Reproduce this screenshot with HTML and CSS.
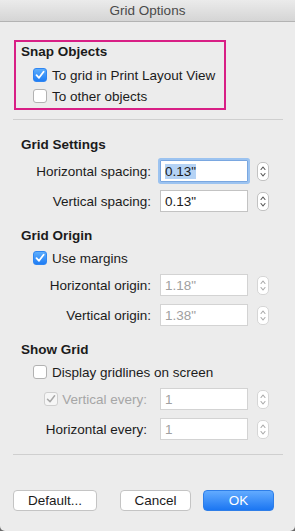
FILE: index.html
```html
<!DOCTYPE html>
<html lang="en">
<head>
    <meta charset="UTF-8">
    <meta name="viewport" content="width=device-width, initial-scale=1.0">
    <title>Grid Options</title>
    <link rel="stylesheet" href="styles.css">
</head>
<body>
    <div class="window">
        <div class="titlebar">Grid Options</div>

        <div class="snap-box">
            <div class="heading">Snap Objects</div>
            <label class="check-row">
                <span class="checkbox checked">
                    <svg viewBox="0 0 14 14"><path d="M3.5 7.2 L6 9.8 L10.6 3.8" fill="none" stroke="#fff" stroke-width="1.8" stroke-linecap="round" stroke-linejoin="round"/></svg>
                </span>
                To grid in Print Layout View
            </label>
            <label class="check-row">
                <span class="checkbox"></span>
                To other objects
            </label>
        </div>

        <div class="separator"></div>

        <div class="section">
            <div class="heading">Grid Settings</div>
            <div class="field-row first">
                <span class="field-label">Horizontal spacing:</span>
                <div class="input focused"><span class="selected">0.13"</span></div>
                <span class="stepper">
                    <svg viewBox="0 0 12 19"><path d="M4 7.5 L6 5 L8 7.5 M4 11.5 L6 14 L8 11.5" fill="none" stroke="#555" stroke-width="1.1" stroke-linecap="round" stroke-linejoin="round"/></svg>
                </span>
            </div>
            <div class="field-row">
                <span class="field-label">Vertical spacing:</span>
                <div class="input">0.13"</div>
                <span class="stepper">
                    <svg viewBox="0 0 12 19"><path d="M4 7.5 L6 5 L8 7.5 M4 11.5 L6 14 L8 11.5" fill="none" stroke="#555" stroke-width="1.1" stroke-linecap="round" stroke-linejoin="round"/></svg>
                </span>
            </div>
        </div>

        <div class="section">
            <div class="heading">Grid Origin</div>
            <label class="check-row">
                <span class="checkbox checked">
                    <svg viewBox="0 0 14 14"><path d="M3.5 7.2 L6 9.8 L10.6 3.8" fill="none" stroke="#fff" stroke-width="1.8" stroke-linecap="round" stroke-linejoin="round"/></svg>
                </span>
                Use margins
            </label>
            <div class="field-row after-check">
                <span class="field-label">Horizontal origin:</span>
                <div class="input disabled">1.18"</div>
                <span class="stepper disabled">
                    <svg viewBox="0 0 12 19"><path d="M4 7.5 L6 5 L8 7.5 M4 11.5 L6 14 L8 11.5" fill="none" stroke="#aaa" stroke-width="1.1" stroke-linecap="round" stroke-linejoin="round"/></svg>
                </span>
            </div>
            <div class="field-row">
                <span class="field-label">Vertical origin:</span>
                <div class="input disabled">1.38"</div>
                <span class="stepper disabled">
                    <svg viewBox="0 0 12 19"><path d="M4 7.5 L6 5 L8 7.5 M4 11.5 L6 14 L8 11.5" fill="none" stroke="#aaa" stroke-width="1.1" stroke-linecap="round" stroke-linejoin="round"/></svg>
                </span>
            </div>
        </div>

        <div class="section">
            <div class="heading">Show Grid</div>
            <label class="check-row">
                <span class="checkbox"></span>
                Display gridlines on screen
            </label>
            <div class="field-row after-check narrow">
                <span class="field-label muted">
                    <span class="checkbox disabled-check">
                        <svg viewBox="0 0 14 14"><path d="M3.5 7.2 L6 9.8 L10.6 3.8" fill="none" stroke="#a8a8a8" stroke-width="1.5" stroke-linecap="round" stroke-linejoin="round"/></svg>
                    </span>
                    Vertical every:
                </span>
                <div class="input disabled">1</div>
                <span class="stepper disabled">
                    <svg viewBox="0 0 12 19"><path d="M4 7.5 L6 5 L8 7.5 M4 11.5 L6 14 L8 11.5" fill="none" stroke="#aaa" stroke-width="1.1" stroke-linecap="round" stroke-linejoin="round"/></svg>
                </span>
            </div>
            <div class="field-row narrow">
                <span class="field-label">Horizontal every:</span>
                <div class="input disabled">1</div>
                <span class="stepper disabled">
                    <svg viewBox="0 0 12 19"><path d="M4 7.5 L6 5 L8 7.5 M4 11.5 L6 14 L8 11.5" fill="none" stroke="#aaa" stroke-width="1.1" stroke-linecap="round" stroke-linejoin="round"/></svg>
                </span>
            </div>
        </div>

        <div class="separator bottom"></div>

        <div class="buttons">
            <button class="btn">Default...</button>
            <button class="btn cancel">Cancel</button>
            <button class="btn primary">OK</button>
        </div>
    </div>
</body>
</html>
```

FILE: styles.css
```css
html {
    background: #6b6b6b;
}

body {
    margin: 0;
    font-family: 'Liberation Sans', Arial, sans-serif;
    font-size: 13.5px;
    color: #1b1b1b;
}

.window {
    width: 295px;
    height: 531px;
    background: #ececec;
    border-radius: 0 0 5px 5px;
    overflow: hidden;
}

.titlebar {
    height: 21px;
    line-height: 22px;
    text-align: center;
    font-size: 13.5px;
    color: #4a4a4a;
    background: linear-gradient(#ebebeb, #d5d5d5);
    border-bottom: 1px solid #b3b3b3;
}

.snap-box {
    margin: 18px 0 0 14px;
    width: 203px;
    height: 64px;
    border: 2px solid #d81f85;
    padding-left: 5px;
    padding-top: 2px;
}

.snap-box .heading {
    margin-bottom: 5px;
}

.snap-box .check-row + .check-row {
    margin-top: 1px;
}

.heading {
    font-weight: bold;
    height: 16px;
    line-height: 16px;
}

.check-row {
    display: flex;
    align-items: center;
    gap: 5px;
    height: 20px;
    margin-left: 12px;
}

.checkbox {
    width: 12px;
    height: 12px;
    border: 1px solid #b2b2b2;
    border-radius: 3px;
    background: #fff;
    display: inline-flex;
    flex-shrink: 0;
}

.checkbox svg {
    width: 14px;
    height: 14px;
    margin: -1px;
}

.checkbox.checked {
    border-color: #2f86f2;
    background: linear-gradient(#5eaefc, #1f7df4);
}

.disabled-check {
    border-color: #cfcfcf;
    background: #f6f6f6;
}

.separator {
    height: 1px;
    background: #cfcfcf;
    margin: 9px 12px 0 13px;
}

.section {
    padding-left: 21px;
    margin-top: 16px;
}

.separator + .section {
    margin-top: 17px;
}

.section .check-row {
    margin-top: 4px;
}

.field-row {
    display: grid;
    grid-template-columns: 130px 88px 12px;
    column-gap: 9px;
    align-items: center;
    height: 22px;
    margin-top: 8px;
}

.field-row.first {
    margin-top: 7px;
}

.field-row.after-check {
    margin-top: 6px;
}

.field-row.narrow .field-label {
    padding-right: 4px;
}

.field-label {
    display: flex;
    justify-content: flex-end;
    align-items: center;
    gap: 4px;
    white-space: nowrap;
}

.field-label.muted {
    color: #a6a6a6;
}

.input {
    height: 20px;
    line-height: 21px;
    border: 1px solid #c3c3c3;
    background: #fff;
    padding-left: 4px;
    white-space: nowrap;
}

.input.focused {
    border-color: #7aa7e0;
    box-shadow: 0 0 0 2px #9cc3f0;
    border-radius: 1px;
}

.input .selected {
    background: #b5d3f5;
}

.input.disabled {
    border-color: #d3d3d3;
    color: #a0a0a0;
}

.stepper {
    width: 10px;
    height: 17px;
    border: 1px solid #c2c2c2;
    border-radius: 5px;
    background: #fff;
    display: flex;
}

.stepper svg {
    width: 12px;
    height: 19px;
    margin: -1px;
}

.stepper.disabled {
    border-color: #d6d6d6;
}

.separator.bottom {
    margin-top: 14px;
}

.buttons {
    display: flex;
    padding-left: 13px;
    margin-top: 35px;
}

.btn {
    font-family: inherit;
    font-size: 13.5px;
    color: #1b1b1b;
    height: 21px;
    padding: 0;
    background: #fff;
    border: 1px solid #c4c4c4;
    border-radius: 4px;
    width: 84px;
}

.btn.cancel {
    width: 71px;
    margin-left: 23px;
}

.btn.primary {
    width: 71px;
    margin-left: 12px;
    color: #fff;
    border-color: #2e7ee8;
    background: linear-gradient(#62abff, #1b76f2);
}
```
